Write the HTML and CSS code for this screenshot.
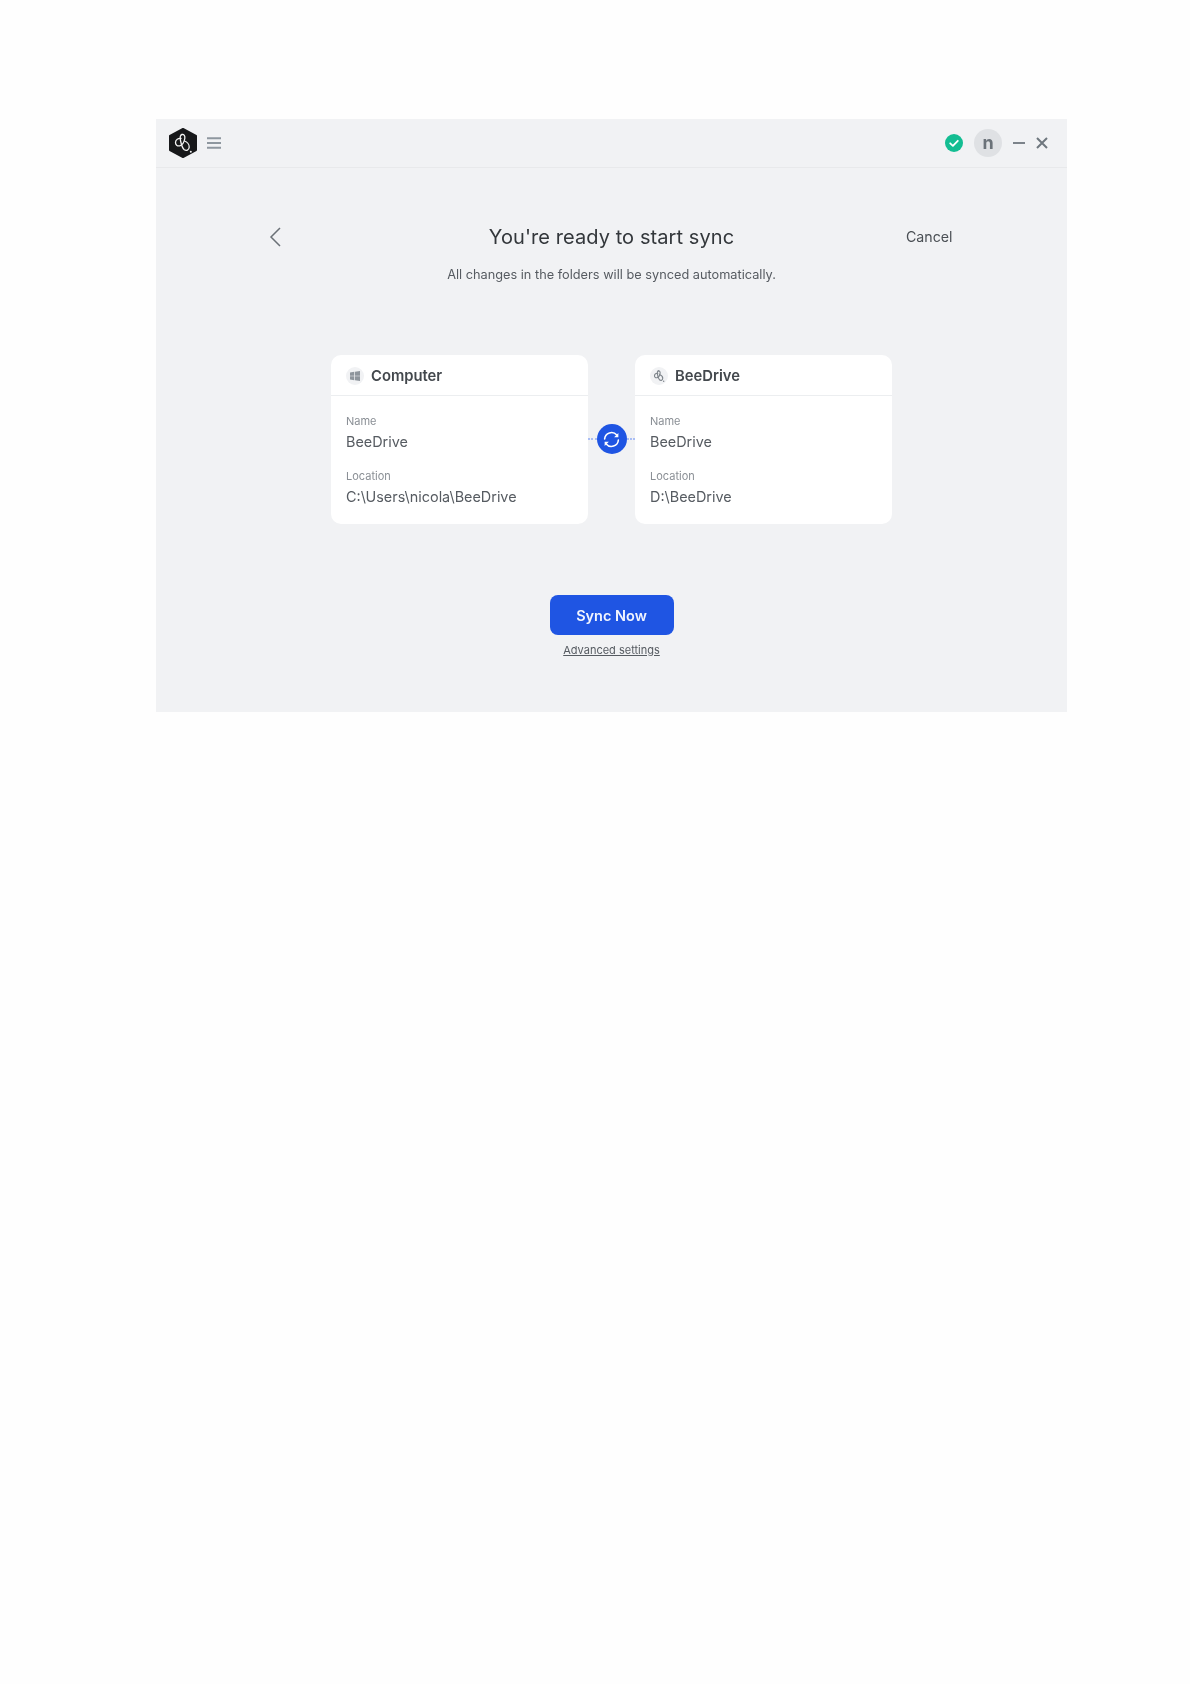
FILE: index.html
```html
<!DOCTYPE html>
<html lang="en">
<head>
    <meta charset="UTF-8">
    <meta name="viewport" content="width=device-width, initial-scale=1.0">
    <title>BeeDrive</title>
    <link rel="stylesheet" href="styles.css">
</head>
<body>
    <div class="window">
        <div class="titlebar">
            <svg class="logo" viewBox="0 0 30 30">
                <path d="M15 1 28 8V22L15 29 2 22V8Z" fill="#17181a" stroke="#17181a" stroke-width="2" stroke-linejoin="round"/>
                <g fill="none" stroke="#f4f4f4" stroke-width="1.300" stroke-linecap="round">
                    <path d="M14 6.500c-1.800.3-2.200 2.800-1.500 6 .7 3.500 1.500 7.500 3.800 9.300 2 1.300 4.700.3 4.900-2.500.2-3-2.200-5.500-4.700-6.300"/>
                    <path d="M14 6.500c2-.3 3.200 1.500 2.800 4-.5 3-2.500 6.500-5 7.300-2.500.7-4.500-1-4.300-3.500.2-2.500 2.700-4.300 5.500-3.800"/>
                </g>
                <circle cx="22.800" cy="23.800" r="1" fill="#f4f4f4"/>
            </svg>
            <svg class="menu" viewBox="0 0 14 12">
                <path d="M0 1.200H14M0 6H14M0 10.800H14" stroke="#8e979f" stroke-width="1.900"/>
            </svg>
            <div class="titlebar-right">
                <svg class="status" viewBox="0 0 18 18">
                    <circle cx="9" cy="9" r="9" fill="#13bd92"/>
                    <path d="M5.200 9.300 7.900 11.800 12.800 6.800" fill="none" stroke="#fff" stroke-width="1.800" stroke-linecap="round" stroke-linejoin="round"/>
                </svg>
                <div class="avatar">n</div>
                <svg class="win-btn" viewBox="0 0 12 12">
                    <path d="M0 6H12" stroke="#6f777e" stroke-width="1.800"/>
                </svg>
                <svg class="win-btn" viewBox="0 0 12 12">
                    <path d="M1 1 11 11M11 1 1 11" stroke="#6f777e" stroke-width="2"/>
                </svg>
            </div>
        </div>

        <div class="content">
            <div class="heading">
                <svg class="back" viewBox="0 0 12 20">
                    <path d="M11 1 2 10 11 19" fill="none" stroke="#6b7177" stroke-width="1.500"/>
                </svg>
                <h1>You're ready to start sync</h1>
                <span class="cancel">Cancel</span>
            </div>
            <p class="subtitle">All changes in the folders will be synced automatically.</p>

            <div class="cards">
                <div class="card">
                    <div class="card-head">
                        <span class="card-icon">
                            <svg viewBox="0 0 10 10"><path d="M0 1.500 4.300 .8V4.700H0ZM5 .7 10 0V4.700H5ZM0 5.300H4.300V9.200L0 8.500ZM5 5.300H10V10L5 9.300Z" fill="#8e959c"/></svg>
                        </span>
                        Computer
                    </div>
                    <div class="card-body">
                        <div class="field-label">Name</div>
                        <div class="field-value">BeeDrive</div>
                        <div class="field-label">Location</div>
                        <div class="field-value">C:\Users\nicola\BeeDrive</div>
                    </div>
                </div>

                <div class="link">
                    <span class="link-dots"></span>
                    <span class="link-circle">
                        <svg viewBox="0 0 18 18">
                            <path d="M2.500 8.500A6.500 6.500 0 0 1 14 4.800M15.500 9.500A6.500 6.500 0 0 1 4 13.200" fill="none" stroke="#fff" stroke-width="1.500" stroke-linecap="round"/>
                            <path d="M15.500 2.800V6.800H11.500ZM2.500 15.200V11.200H6.500Z" fill="#fff"/>
                        </svg>
                    </span>
                    <span class="link-dots"></span>
                </div>

                <div class="card">
                    <div class="card-head">
                        <span class="card-icon card-icon-bee">
                            <svg viewBox="0 0 30 30">
                                <g fill="none" stroke="#7d848a" stroke-width="1.900" stroke-linecap="round">
                                    <path d="M14 6.500c-1.800.3-2.200 2.800-1.500 6 .7 3.500 1.500 7.500 3.800 9.300 2 1.300 4.700.3 4.900-2.500.2-3-2.200-5.500-4.700-6.300"/>
                                    <path d="M14 6.500c2-.3 3.200 1.500 2.800 4-.5 3-2.500 6.500-5 7.300-2.500.7-4.500-1-4.300-3.500.2-2.500 2.700-4.300 5.500-3.800"/>
                                </g>
                                <circle cx="22.800" cy="23.800" r="1.200" fill="#7d848a"/>
                            </svg>
                        </span>
                        BeeDrive
                    </div>
                    <div class="card-body">
                        <div class="field-label">Name</div>
                        <div class="field-value">BeeDrive</div>
                        <div class="field-label">Location</div>
                        <div class="field-value">D:\BeeDrive</div>
                    </div>
                </div>
            </div>

            <button class="sync-btn">Sync Now</button>
            <a class="advanced" href="#">Advanced settings</a>
        </div>
    </div>
</body>
</html>
```

FILE: styles.css
```css
body {
    font-family: 'Inter', 'Liberation Sans', sans-serif;
    background: #fefefe;
    margin: 0;
    padding: 119px 0 0 156px;
    color: #3d4247;
}

.window {
    width: 911px;
    height: 593px;
    background: #f1f2f4;
    filter: blur(0.35px);
}

.titlebar {
    display: flex;
    align-items: center;
    height: 48px;
    padding: 0 19px 0 12px;
    border-bottom: 1px solid #e8e9eb;
}

.logo {
    width: 30px;
    height: 30px;
}

.menu {
    width: 14px;
    height: 12px;
    margin-left: 9px;
}

.titlebar-right {
    display: flex;
    align-items: center;
    margin-left: auto;
}

.status {
    width: 18px;
    height: 18px;
}

.avatar {
    width: 28px;
    height: 28px;
    margin: 0 11px 0 11px;
    border-radius: 50%;
    background: #dfe1e4;
    color: #6b7279;
    font-size: 18px;
    font-weight: 700;
    line-height: 28px;
    text-align: center;
}

.win-btn {
    width: 12px;
    height: 12px;
}

.win-btn + .win-btn {
    margin-left: 11px;
}

.content {
    display: flex;
    flex-direction: column;
    align-items: center;
}

.heading {
    position: relative;
    width: 911px;
    margin-top: 56px;
    text-align: center;
}

.heading h1 {
    margin: 0;
    font-size: 20px;
    font-weight: 400;
    line-height: 26px;
    letter-spacing: 0.08px;
    color: #33373b;
}

.back {
    position: absolute;
    left: 113px;
    top: 3px;
    width: 12px;
    height: 20px;
}

.cancel {
    position: absolute;
    left: 750px;
    top: 4px;
    font-size: 14.200px;
    line-height: 18px;
    color: #4a4f54;
}

.subtitle {
    margin: 16px 0 0 0;
    font-size: 12.750px;
    line-height: 18px;
    color: #565b61;
}

.cards {
    display: flex;
    margin-top: 71px;
}

.card {
    width: 257px;
    height: 169px;
    background: #fff;
    border-radius: 10px;
}

.card-head {
    display: flex;
    align-items: center;
    box-sizing: border-box;
    height: 41px;
    padding: 2px 14px 0 15px;
    border-bottom: 1px solid #eceef0;
    font-size: 14.800px;
    font-weight: 600;
    color: #43484d;
}

.card-icon {
    display: flex;
    align-items: center;
    justify-content: center;
    width: 18px;
    height: 18px;
    margin-right: 7px;
    border-radius: 50%;
    background: #f1f2f4;
}

.card-icon svg {
    width: 10px;
    height: 10px;
}

.card-icon-bee svg {
    width: 18px;
    height: 18px;
}

.card-body {
    padding: 0 15px;
}

.field-label {
    margin-top: 18px;
    font-size: 11px;
    line-height: 14px;
    color: #8a8f95;
}

.field-value {
    margin-top: 5px;
    font-size: 14.400px;
    line-height: 18px;
    color: #565b61;
}

.link {
    display: flex;
    align-items: center;
    width: 47px;
    height: 30px;
    margin-top: 69px;
}

.link-dots {
    flex: 1;
    border-top: 2px dotted #a9bdf5;
}

.link-circle {
    display: flex;
    align-items: center;
    justify-content: center;
    width: 30px;
    height: 30px;
    border-radius: 50%;
    background: #1f55e3;
}

.link-circle svg {
    width: 19px;
    height: 19px;
}

.sync-btn {
    width: 124px;
    height: 40px;
    margin-top: 71px;
    padding-top: 2px;
    border: none;
    border-radius: 8px;
    background: #1f55e3;
    color: #f2f5fe;
    font-family: inherit;
    font-size: 14.500px;
    font-weight: 600;
}

.advanced {
    margin-top: 8px;
    font-size: 11px;
    line-height: 15px;
    color: #565b61;
}
```
